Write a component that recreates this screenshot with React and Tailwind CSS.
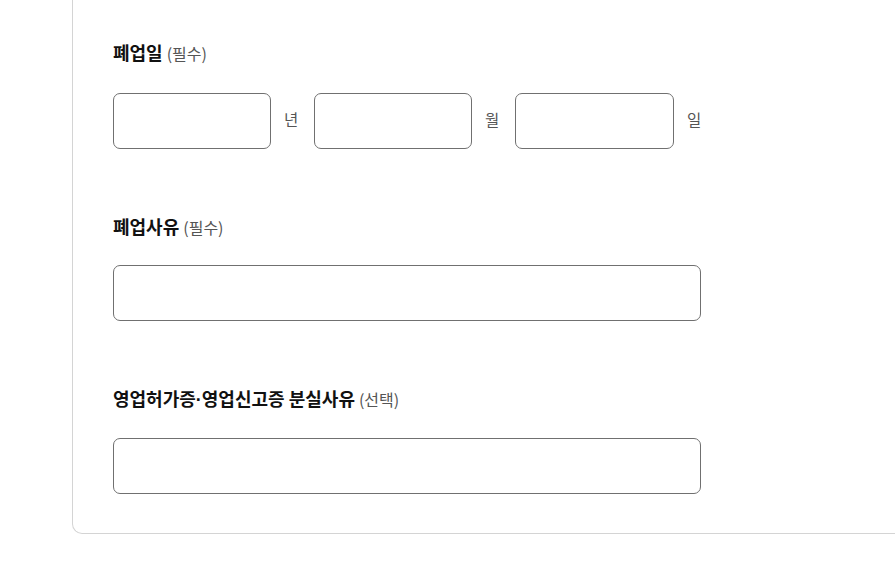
import React from "react";

const font = { fontFamily: '"Noto Sans CJK KR", "Noto Sans", sans-serif' };

function FieldLabel({ title, note }) {
  return (
    <div className="flex h-[24px] items-baseline gap-[4px] leading-[24px]">
      <span className="text-[18px] font-bold text-[#111]">{title}</span>
      <span className="text-[16px] text-[#555]">{note}</span>
    </div>
  );
}

function Box({ className = "" }) {
  return (
    <input
      type="text"
      className={`block h-[56px] rounded-[7px] border border-[#707070] bg-white px-4 text-[16px] outline-none ${className}`}
    />
  );
}

function Unit({ children }) {
  return <span className="mb-[3px] ml-[13px] mr-[16px] w-[14px] text-[15.5px] text-[#555]">{children}</span>;
}

export default function App() {
  return (
    <div className="h-[571px] w-[895px] overflow-hidden bg-white pl-[72px]" style={font}>
      <div className="w-[900px] rounded-bl-[10px] border-b border-l border-[#d4d4d4] pt-[40px] pb-[39px] pl-[40px]">
        <FieldLabel title="폐업일" note="(필수)" />
        <div className="mt-[29px] flex h-[56px] items-center">
          <Box className="w-[158px]" />
          <Unit>년</Unit>
          <Box className="w-[158px]" />
          <Unit>월</Unit>
          <Box className="w-[159px]" />
          <Unit>일</Unit>
        </div>

        <div className="mt-[65px]">
          <FieldLabel title="폐업사유" note="(필수)" />
          <Box className="mt-[27px] w-[588px]" />
        </div>

        <div className="mt-[65px]">
          <FieldLabel
            title={
              <>
                영업허가증<span style={{ fontFamily: '"Liberation Sans", sans-serif' }}>·</span>영업신고증 분실사유
              </>
            }
            note="(선택)"
          />
          <Box className="mt-[28px] w-[588px]" />
        </div>
      </div>
    </div>
  );
}
